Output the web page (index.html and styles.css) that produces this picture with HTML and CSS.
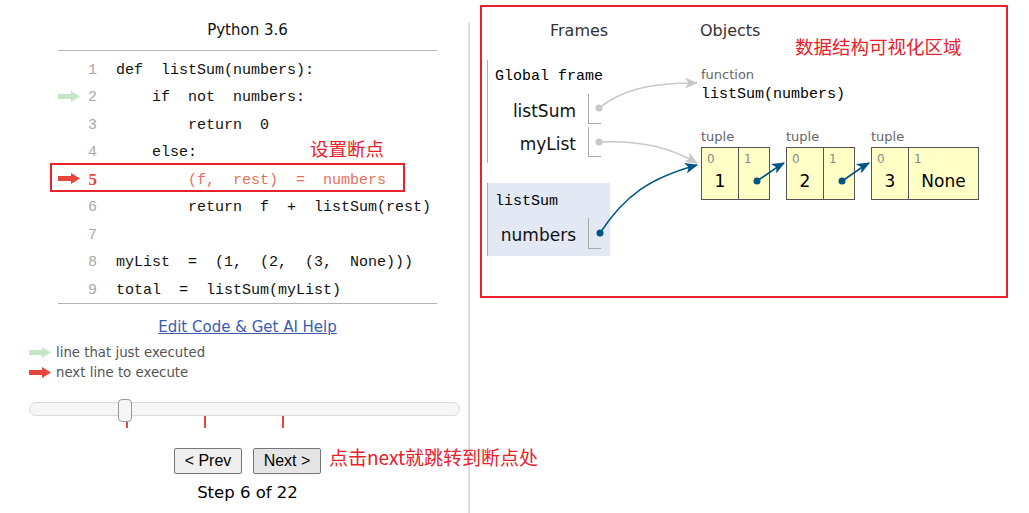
FILE: index.html
```html
<!DOCTYPE html>
<html lang="zh">
<head>
<meta charset="utf-8">
<title>Python Tutor</title>
<link rel="stylesheet" href="styles.css">
</head>
<body>
<div class="page">
  <div class="left">
    <div class="editor">
      <div class="lang">Python 3.6</div>
      <div class="code">
        <div class="row"><span class="arrow"></span><span class="ln">1</span><span class="src">def  listSum(numbers):</span></div>
        <div class="row"><span class="arrow"><svg width="22" height="11" viewBox="0 0 22 11"><polygon points="0,3 13,3 13,0 22,5.5 13,11 13,8 0,8" fill="#c6e5c6"/></svg></span><span class="ln">2</span><span class="src">    if  not  numbers:</span></div>
        <div class="row"><span class="arrow"></span><span class="ln">3</span><span class="src">        return  0</span></div>
        <div class="row"><span class="arrow"></span><span class="ln">4</span><span class="src">    else:</span><span class="note note-bp">设置断点</span></div>
        <div class="row row-next"><span class="arrow"><svg width="22" height="11" viewBox="0 0 22 11"><polygon points="0,3 13,3 13,0 22,5.5 13,11 13,8 0,8" fill="#e8463a"/></svg></span><span class="ln">5</span><span class="src">        (f,  rest)  =  numbers</span><span class="bp-box"></span></div>
        <div class="row"><span class="arrow"></span><span class="ln">6</span><span class="src">        return  f  +  listSum(rest)</span></div>
        <div class="row"><span class="arrow"></span><span class="ln">7</span><span class="src"></span></div>
        <div class="row"><span class="arrow"></span><span class="ln">8</span><span class="src">myList  =  (1,  (2,  (3,  None)))</span></div>
        <div class="row"><span class="arrow"></span><span class="ln">9</span><span class="src">total  =  listSum(myList)</span></div>
      </div>
      <div class="edit-link"><a href="#">Edit Code &amp; Get AI Help</a></div>
    </div>
    <div class="legend">
      <div class="legend-item"><svg width="22" height="11" viewBox="0 0 22 11"><polygon points="0,3 13,3 13,0 22,5.5 13,11 13,8 0,8" fill="#c6e5c6"/></svg><span>line that just executed</span></div>
      <div class="legend-item"><svg width="22" height="11" viewBox="0 0 22 11"><polygon points="0,3 13,3 13,0 22,5.5 13,11 13,8 0,8" fill="#e8463a"/></svg><span>next line to execute</span></div>
    </div>
    <div class="slider">
      <div class="track"></div>
      <span class="tick" style="left:97px"></span>
      <span class="tick" style="left:175px"></span>
      <span class="tick" style="left:253px"></span>
      <span class="handle"></span>
    </div>
    <div class="nav">
      <button class="btn">&lt; Prev</button>
      <button class="btn btn-next">Next &gt;</button>
      <span class="note note-next">点击next就跳转到断点处</span>
    </div>
    <div class="step">Step 6 of 22</div>
  </div>
  <div class="divider"></div>
  <div class="right">
    <div class="viz">
      <div class="viz-head"><span class="h-frames">Frames</span><span class="h-objects">Objects</span></div>
      <span class="note note-viz">数据结构可视化区域</span>
      <div class="viz-body">
        <div class="frames">
          <div class="frame frame-global">
            <div class="frame-title">Global frame</div>
            <div class="vars">
              <div class="var"><span class="var-name">listSum</span><span class="var-cell"></span></div>
              <div class="var"><span class="var-name">myList</span><span class="var-cell"></span></div>
            </div>
          </div>
          <div class="frame frame-active">
            <div class="frame-title">listSum</div>
            <div class="vars vars-active">
              <div class="var var-tall"><span class="var-name">numbers</span><span class="var-cell"></span></div>
            </div>
          </div>
        </div>
        <div class="objects">
          <div class="obj-label">function</div>
          <div class="func-name">listSum(numbers)</div>
          <div class="tuples">
            <div class="tuple">
              <div class="obj-label">tuple</div>
              <div class="tuple-box">
                <div class="cell"><div class="idx">0</div><div class="val">1</div></div>
                <div class="cell cell-ptr"><div class="idx">1</div></div>
              </div>
            </div>
            <div class="tuple">
              <div class="obj-label">tuple</div>
              <div class="tuple-box">
                <div class="cell"><div class="idx">0</div><div class="val">2</div></div>
                <div class="cell cell-ptr"><div class="idx">1</div></div>
              </div>
            </div>
            <div class="tuple">
              <div class="obj-label">tuple</div>
              <div class="tuple-box">
                <div class="cell"><div class="idx">0</div><div class="val">3</div></div>
                <div class="cell cell-wide"><div class="idx">1</div><div class="val">None</div></div>
              </div>
            </div>
          </div>
        </div>
      </div>
    </div>
  </div>
  <svg class="arrows" width="1029" height="513" viewBox="0 0 1029 513">
    <defs>
      <marker id="hg" viewBox="0 0 12 10" refX="11" refY="5" markerWidth="13" markerHeight="11" orient="auto" markerUnits="userSpaceOnUse"><path d="M0,0 L12,5 L0,10 L3,5 z" fill="#c8c8c8"/></marker>
      <marker id="hb" viewBox="0 0 12 10" refX="11" refY="5" markerWidth="13" markerHeight="11" orient="auto" markerUnits="userSpaceOnUse"><path d="M0,0 L12,5 L0,10 L3,5 z" fill="#005583"/></marker>
    </defs>
    <path d="M599,108 C622,90 648,83 697,83" fill="none" stroke="#c8c8c8" stroke-width="1.6" marker-end="url(#hg)"/>
    <path d="M599,142 C645,140 672,149 697,163" fill="none" stroke="#c8c8c8" stroke-width="1.6" marker-end="url(#hg)"/>
    <path d="M600,233 C625,195 650,178 697,165" fill="none" stroke="#005583" stroke-width="1.6" marker-end="url(#hb)"/>
    <path d="M757,181 C768,174 775,168 784,163" fill="none" stroke="#005583" stroke-width="1.6" marker-end="url(#hb)"/>
    <path d="M842,181 C853,174 860,168 869,163" fill="none" stroke="#005583" stroke-width="1.6" marker-end="url(#hb)"/>
    <circle cx="599" cy="108" r="3.5" fill="#c8c8c8"/>
    <circle cx="599" cy="142" r="3.5" fill="#c8c8c8"/>
    <circle cx="600" cy="233" r="3.5" fill="#005583"/>
    <circle cx="757" cy="181" r="3.5" fill="#005583"/>
    <circle cx="842" cy="181" r="3.5" fill="#005583"/>
  </svg>
</div>
</body>
</html>
```

FILE: styles.css
```css
* { box-sizing: border-box; }
body {
  margin: 0;
  background: #fff;
  color: #000;
  font-family: "DejaVu Sans", Verdana, sans-serif;
}
.page {
  position: relative;
  display: flex;
  width: 1029px;
  height: 513px;
  overflow: hidden;
}
.left { width: 468px; flex: none; }
.divider { width: 2px; flex: none; margin-top: 23px; background: #dcdcdc; }
.right { flex: 1; padding: 5px 0 0 10px; }

/* editor */
.editor { margin-left: 58px; width: 379px; }
.lang {
  padding: 20px 0 10px;
  line-height: 20px;
  font-size: 15px;
  text-align: center;
  color: #111;
  border-bottom: 1px solid #b4b4b4;
}
.code { padding-top: 4px; border-bottom: 1px solid #b4b4b4; }
.row {
  position: relative;
  display: flex;
  align-items: center;
  height: 27.5px;
  padding-top: 3px;
  font-family: "Liberation Mono", monospace;
  font-size: 15px;
}
.arrow { width: 24px; flex: none; display: flex; align-items: center; margin-top: -3px; }
.arrow svg { display: block; }
.ln { width: 15px; flex: none; text-align: right; color: #a8a8a8; }
.src { margin-left: 19px; white-space: pre; color: #111; }
.row-next .ln { color: #e8463a; font-weight: bold; font-family: "Liberation Serif", serif; font-size: 17px; }
.row-next .src { color: #e8705e; }
.bp-box {
  position: absolute;
  left: -8px;
  top: -2px;
  width: 355px;
  height: 29px;
  border: 2px solid #e8212b;
}
.note {
  position: absolute;
  color: #e8212b;
  font-family: "Noto Sans CJK SC", "Liberation Sans", sans-serif;
  white-space: nowrap;
}
.note-bp { left: 252px; top: -2px; font-size: 18.5px; line-height: 24px; }
.edit-link { margin-top: 13px; line-height: 20px; text-align: center; font-size: 15px; }
.edit-link a { color: #3b5cad; text-decoration: underline; }

/* legend */
.legend { margin: 6px 0 0 29px; font-size: 13.3px; color: #555; }
.legend-item { display: flex; align-items: center; gap: 5px; height: 20px; }
.legend-item svg { display: block; }

/* slider */
.slider { position: relative; margin: 19px 0 0 29px; width: 431px; height: 26px; }
.track {
  height: 14px;
  border: 1px solid #dcdcdc;
  border-radius: 7px;
  background: #f6f6f6;
}
.tick { position: absolute; top: 14px; width: 2px; height: 12px; background: #e8463a; }
.handle {
  position: absolute;
  left: 89px;
  top: -3px;
  width: 14px;
  height: 23px;
  border: 1px solid #999;
  border-radius: 4px;
  background: #f6f6f6;
}

/* nav */
.nav {
  position: relative;
  display: flex;
  justify-content: center;
  gap: 11px;
  margin: 20px 0 0 58px;
  width: 379px;
}
.btn {
  width: 68px;
  height: 26px;
  padding: 0;
  font-family: "Liberation Sans", Arial, sans-serif;
  font-size: 16px;
  color: #000;
  background: #efefef;
  border: 1px solid #767676;
  border-radius: 2px;
}
.btn-next { background: #e5e5e5; }
.note-next { left: 271px; top: -3px; font-size: 19px; line-height: 24px; }
.step {
  margin: 9px 0 0 58px;
  width: 379px;
  text-align: center;
  line-height: 20px;
  font-size: 16.5px;
}

/* visualization */
.viz {
  position: relative;
  width: 528px;
  height: 293px;
  border: 2px solid #e8212b;
}
.viz-head { display: flex; padding-top: 14px; line-height: 20px; font-size: 16px; color: #333; }
.h-frames { margin-left: 68px; width: 150px; }
.note-viz { left: 313px; top: 27px; font-size: 18.5px; line-height: 24px; }
.viz-body { display: flex; margin-top: 19px; }
.frames { margin-left: 5px; width: 123px; flex: none; }
.frame { border-left: 1px solid #aab0b6; }
.frame-global { padding-bottom: 6px; }
.frame-active { margin-top: 20px; padding-bottom: 7px; background: #e2e9f4; border-left-color: #a4abb8; }
.frame-title {
  padding: 8px 0 0 7px;
  height: 24px;
  font-family: "Liberation Mono", monospace;
  font-size: 15px;
  line-height: 18px;
}
.frame-active .frame-title { padding-top: 10px; height: 26px; }
.vars { margin-top: 10px; display: flex; flex-direction: column; gap: 3px; }
.vars-active { margin-top: 9px; }
.var { display: flex; height: 30px; align-items: center; }
.var-tall { height: 31px; }
.var-name { width: 88px; padding-top: 3px; text-align: right; font-size: 17px; color: #111; }
.var-cell {
  align-self: stretch;
  width: 13px;
  margin-left: 12px;
  border-left: 1px solid #aaa;
  border-bottom: 1px solid #aaa;
}
.objects { margin-left: 91px; padding-top: 7px; }
.obj-label { font-size: 13px; line-height: 16px; color: #666; }
.func-name { padding-top: 2px; font-family: "Liberation Mono", monospace; font-size: 15px; line-height: 20px; }
.tuples { display: flex; gap: 16px; margin-top: 24px; }
.tuple .obj-label { margin-bottom: 2px; }
.tuple-box { display: flex; border: 1px solid #555; background: #ffffc6; height: 53px; }
.cell { width: 36px; }
.cell + .cell { border-left: 1px solid #555; }
.cell-ptr { width: 31px; }
.cell-wide { width: 70px; }
.idx { padding: 4px 0 0 5px; font-size: 12px; line-height: 14px; color: #888; }
.val { margin-top: 4px; text-align: center; font-size: 17px; line-height: 22px; }

.arrows { position: absolute; left: 0; top: 0; pointer-events: none; }
```
